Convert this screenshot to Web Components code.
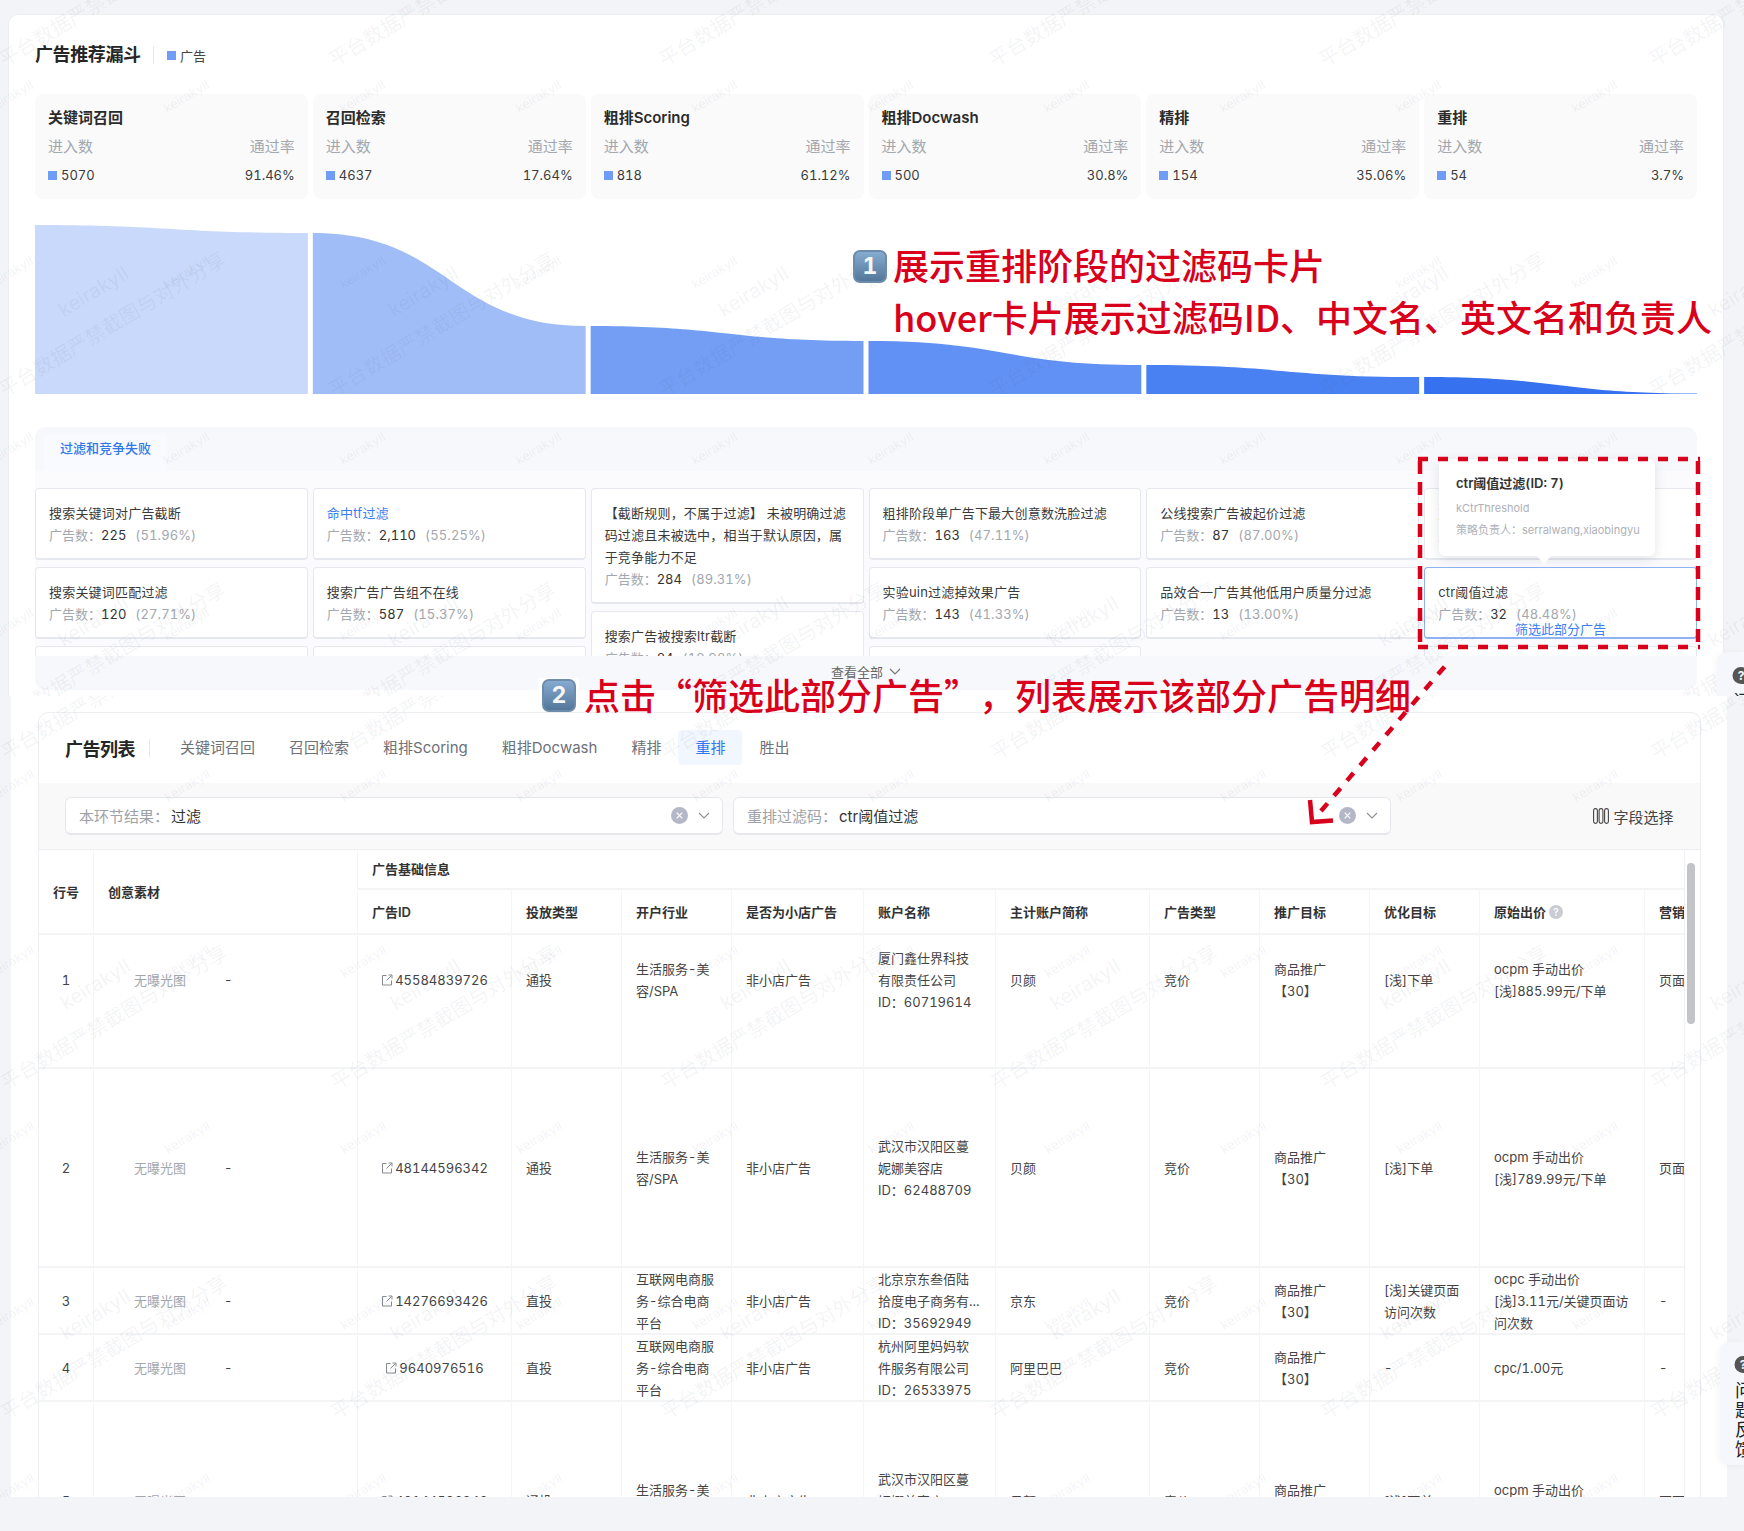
<!DOCTYPE html>
<html lang="zh-CN"><head><meta charset="utf-8"><title>广告推荐漏斗</title>
<style>
html,body{margin:0;padding:0}
body{width:1744px;height:1531px;position:relative;overflow:hidden;background:#f3f4f7;font-family:Inter,"Noto Sans CJK SC",sans-serif;font-variant-numeric:tabular-nums;color:#333;font-size:13px}
shot-top,shot-bottom{display:block}
</style></head><body>
<shot-top></shot-top>
<shot-bottom></shot-bottom>
<note-layer></note-layer>
<script>
function def(name,css,html,extra){
  customElements.define(name,class extends HTMLElement{
    connectedCallback(){
      if(this.shadowRoot)return;
      const r=this.attachShadow({mode:'open'});
      r.innerHTML='<style>'+css+'</style>'+(typeof html==='function'?html(this):html);
      if(extra)extra(this,r);
    }
  });
}
/* watermark */
def('wm-layer',`:host{position:absolute;inset:0;overflow:hidden;pointer-events:none;z-index:5}
span{position:absolute;white-space:nowrap;transform-origin:0 100%;transform:rotate(-31deg);line-height:1}
.a{font-size:20px;color:rgba(70,80,100,.07)}.b{font-size:20px;color:rgba(70,80,100,.07)}.c{font-size:13px;color:rgba(70,80,100,.08)}`,
h=>{
  const bx=+h.getAttribute('bx'),by=+h.getAttribute('by'),sx=+h.getAttribute('sx'),sy=+h.getAttribute('sy'),H=+h.getAttribute('h');
  let o='';
  const put=(c,x,y,t,fs)=>{o+=`<span class="${c}" style="left:${x}px;top:${y-fs}px">${t}</span>`};
  for(let i=0;i<6;i++)for(let j=-1;j<4;j++){
    const x=bx+330*i,y=by+330*j;
    if(y-160>H)continue;
    put('a',x,y,'平台数据严禁截图与对外分享',20);
    put('b',x+59,y-80,'keirakyll',20);
  }
  for(let i=0;i<11;i++)for(let j=-1;j<6;j++){
    const x=sx+176*i,y=sy+176*j;
    if(y-40>H||y<0)continue;
    put('c',x,y,'keirakyll',13);
  }
  return o;
});
/* stat card */
def('stat-card',`:host{display:block;background:#fafafa;border-radius:8px;padding:11px 13px 12px;height:105px;box-sizing:border-box}
.t{font-size:15px;font-weight:600;line-height:26px;color:#2b2b2b}
.r{display:flex;justify-content:space-between}
.l{line-height:32px;font-size:15px;color:#a3a7ae}
.v{line-height:24px;font-size:13px;color:#3c3c3c}
i{display:inline-block;width:9px;height:9px;background:#6f9cf5;margin-right:4px}`,
h=>`<div class="t">${h.getAttribute('name')}</div><div class="r l"><span>进入数</span><span>通过率</span></div><div class="r v"><span><i></i>${h.getAttribute('count')}</span><span>${h.getAttribute('rate')}</span></div>`);
/* funnel */
def('funnel-chart',`:host{display:block;height:169px;margin-top:26px}svg{display:block}`,
()=>{
  const ys=[[0,8],[8,101],[101,116],[116,140],[140,152],[152,168.5]],cs=['#c8d9fb','#a1bdf8','#739ef4','#6191f4','#4a81f2','#3671f0'];
  let p='';
  ys.forEach((y,i)=>{const a=277.83*i,b=a+272.83,m=136;
    p+=`<path fill="${cs[i]}" d="M${a} ${y[0]}C${a+m} ${y[0]} ${b-m} ${y[1]} ${b} ${y[1]}L${b} 169L${a} 169Z"/>`});
  return `<svg width="1662" height="169" viewBox="0 0 1662 169">${p}</svg>`;
});
/* filter card */
def('filter-card',`:host{display:block;position:relative;flex:none;box-sizing:border-box;background:#fff;border:1px solid #e6e8ef;border-bottom-width:2px;border-radius:4px;padding:13px 13px 12px;line-height:22px;font-size:13px;color:#3a3a3a}
:host([sel]){border-color:#8fb2f5}
:host([link]) .n{color:#3b7ff0}
.n{letter-spacing:.2px}
.g{color:#a3a7ae}.c{color:#333}.p{color:#a3a7ae;margin-left:9px;letter-spacing:.1px}
.act{position:absolute;left:0;right:0;top:50px;text-align:center;color:#3b7ff0}`,
h=>`<div class="n"><slot></slot></div><div class="m"><span class="g">广告数：</span><span class="c">${h.getAttribute('n')}</span><span class="p">(${h.getAttribute('p')})</span></div>${h.hasAttribute('sel')?'<div class="act">筛选此部分广告</div>':''}`);
def('tip-box',`:host{position:absolute;left:1404px;top:32px;width:216px;height:97px;box-sizing:border-box;background:#fff;border-radius:6px;box-shadow:0 3px 12px rgba(40,50,70,.13);padding:13px 17px;z-index:3}
.t{font-size:13px;font-weight:600;line-height:22px;color:#333}.k{font-size:11px;color:#aeb2b8;line-height:22px;margin-top:3px;white-space:nowrap}
.k2{margin-top:0}
b{position:absolute;left:98px;bottom:-8px;width:0;height:0;border:7px solid transparent;border-bottom:0;border-top:8px solid #fff}`,
`<div class="t">ctr阈值过滤(ID: 7)</div><div class="k">kCtrThreshold</div><div class="k k2">策略负责人：serralwang,xiaobingyu</div><b></b>`);
def('filter-panel',`:host{display:block;position:relative;margin-top:33px;height:263px;background:#f7f8fc;border-radius:10px}
.h{height:44px;box-sizing:border-box}
.tab{display:inline-block;margin:8px 0 0 9px;height:36px;padding:0 16px;line-height:27px;background:#f8faff;color:#2f78ee;font-size:13px;font-weight:500;border-radius:4px 4px 0 0}
.b{background:#fbfbfe;height:185px;padding-top:17px;box-sizing:border-box;overflow:hidden}
.grid{display:grid;grid-template-columns:repeat(6,1fr);gap:5px;height:168px;overflow:hidden;width:1662px}
.col{display:flex;flex-direction:column;gap:7px}
.f{height:34px;display:flex;align-items:center;justify-content:center;gap:6px;color:#666;font-size:13px;padding-bottom:3px;box-sizing:border-box}`,
`<div class="h"><span class="tab">过滤和竞争失败</span></div>
<div class="b"><div class="grid">
<div class="col"><filter-card n="225" p="51.96%">搜索关键词对广告截断</filter-card><filter-card n="120" p="27.71%">搜索关键词匹配过滤</filter-card><filter-card n="98" p="22.63%">搜索广告计划不在线</filter-card></div>
<div class="col"><filter-card link n="2,110" p="55.25%">命中tf过滤</filter-card><filter-card n="587" p="15.37%">搜索广告广告组不在线</filter-card><filter-card n="201" p="5.26%">搜索广告不在投放时段</filter-card></div>
<div class="col"><filter-card n="284" p="89.31%">【截断规则，不属于过滤】 未被明确过滤码过滤且未被选中，相当于默认原因，属于竞争能力不足</filter-card><filter-card n="84" p="19.98%">搜索广告被搜索ltr截断</filter-card></div>
<div class="col"><filter-card n="163" p="47.11%">粗排阶段单广告下最大创意数洗脸过滤</filter-card><filter-card n="143" p="41.33%">实验uin过滤掉效果广告</filter-card><filter-card n="40" p="11.56%">粗排阶段过滤</filter-card></div>
<div class="col"><filter-card n="87" p="87.00%">公线搜索广告被起价过滤</filter-card><filter-card n="13" p="13.00%">品效合一广告其他低用户质量分过滤</filter-card></div>
<div class="col"><filter-card n="34" p="51.52%">重排过滤</filter-card><filter-card sel n="32" p="48.48%">ctr阈值过滤</filter-card><filter-card n="12" p="18.18%">重排阶段过滤</filter-card></div>
</div></div>
<div class="f"><span>查看全部</span><svg width="12" height="8" viewBox="0 0 12 8"><path d="M1 1l5 5 5-5" fill="none" stroke="#777" stroke-width="1.2"/></svg></div>
<tip-box></tip-box>`);
/* float */
const bubble=`<svg width="22" height="20" viewBox="0 0 22 20"><path d="M10 1a8.5 8.5 0 1 0 0 17h9l-2.2-3.6A8.5 8.5 0 0 0 10 1z" fill="#555"/><text x="10" y="14" text-anchor="middle" font-size="12" font-weight="700" fill="#f5f7fd" font-family="Inter,sans-serif">?</text></svg>`;
def('float-help',`:host{position:absolute;background:#f5f7fd;border-radius:10px 0 0 10px;box-shadow:-1px 1px 6px rgba(60,70,90,.06);box-sizing:border-box;z-index:6;overflow:hidden}
.t{font-size:18px;line-height:19.5px;width:18px;color:#222;margin:6px 0 0 2px}svg{display:block}`,
()=>`${bubble}<div class="t">问题反馈</div>`);
/* top shot */
def('shot-top',`:host{display:block;position:relative;height:696px;overflow:hidden}
.card{position:absolute;left:8px;right:20px;top:14px;bottom:-20px;box-sizing:border-box;background:#fff;border:1px solid #eceef2;border-radius:10px;padding:26px 26px 0}
.hd{display:flex;align-items:center;height:28px}
h1{margin:0;font-size:18px;font-weight:600;color:#262626;line-height:28px;width:118px;letter-spacing:-.4px}
.d{width:1px;height:18px;background:#e8e8e8}
.lg{display:flex;align-items:center;font-size:13px;color:#444;margin-left:13px}
.lg i{width:9px;height:9px;background:#6f9cf5;margin-right:4px}
.st{display:grid;grid-template-columns:repeat(6,1fr);gap:5px;margin-top:25px;width:1662px}
float-help{left:1717px;top:652px;width:27px;height:60px;padding:14px 0 0 14px}`,
`<div class="card"><div class="hd"><h1>广告推荐漏斗</h1><span class="d"></span><span class="lg"><i></i>广告</span></div>
<div class="st">
<stat-card name="关键词召回" count="5070" rate="91.46%"></stat-card>
<stat-card name="召回检索" count="4637" rate="17.64%"></stat-card>
<stat-card name="粗排Scoring" count="818" rate="61.12%"></stat-card>
<stat-card name="粗排Docwash" count="500" rate="30.8%"></stat-card>
<stat-card name="精排" count="154" rate="35.06%"></stat-card>
<stat-card name="重排" count="54" rate="3.7%"></stat-card>
</div><funnel-chart></funnel-chart><filter-panel></filter-panel></div>
<float-help></float-help>
<wm-layer bx="6" by="70" sx="-8" sy="115" h="696"></wm-layer>`);
/* select */
const clearI=`<svg width="17" height="17" viewBox="0 0 17 17"><circle cx="8.5" cy="8.5" r="8.5" fill="#b4b8c6"/><path d="M5.7 5.7l5.6 5.6M11.3 5.7l-5.6 5.6" stroke="#fff" stroke-width="1.2"/></svg>`;
const chev=`<svg width="12" height="8" viewBox="0 0 12 8"><path d="M1 1l5 5 5-5" fill="none" stroke="#8a8f98" stroke-width="1.1"/></svg>`;
def('select-box',`:host{display:flex;align-items:center;box-sizing:border-box;width:658px;height:38px;background:#fff;border:1px solid #e5e7ec;border-bottom-width:2px;border-radius:6px;padding:0 12px 0 13px;font-size:15px}
.l{color:#9da1a8;margin-right:2px}.v{color:#333}.s{flex:1}svg{display:block}.c{margin-right:10px}`,
h=>`<span class="l">${h.getAttribute('label')}：</span><span class="v">${h.getAttribute('value')}</span><span class="s"></span><span class="c">${clearI}</span>${chev}`);
/* table */
const ext=`<svg width="12" height="12" viewBox="0 0 12 12" style="margin-right:2px;flex:none"><path d="M5.5 1.5H1.5v9.5h9V6.5M5.5 6.5l5-5M7.5 1h3.5v3.5" fill="none" stroke="#85898f" stroke-width="1"/></svg>`;
const rows=[
 {h:134,pb:42,n:1,id:'45584839726',t:'通投',ind:'生活服务-美<br>容/SPA',ac:'厦门鑫仕界科技<br>有限责任公司<br>ID：60719614',s:'贝颜',o:'[浅]下单',b:'ocpm 手动出价<br>[浅]885.99元/下单',m:'页面'},
 {h:199,pb:0,n:2,id:'48144596342',t:'通投',ind:'生活服务-美<br>容/SPA',ac:'武汉市汉阳区蔓<br>妮娜美容店<br>ID：62488709',s:'贝颜',o:'[浅]下单',b:'ocpm 手动出价<br>[浅]789.99元/下单',m:'页面'},
 {h:67,pb:0,n:3,id:'14276693426',t:'直投',ind:'互联网电商服<br>务-综合电商<br>平台',ac:'北京京东叁佰陆<br>拾度电子商务有...<br>ID：35692949',s:'京东',o:'[浅]关键页面<br>访问次数',b:'ocpc 手动出价<br>[浅]3.11元/关键页面访<br>问次数',m:'-'},
 {h:67,pb:0,n:4,id:'9640976516',t:'直投',ind:'互联网电商服<br>务-综合电商<br>平台',ac:'杭州阿里妈妈软<br>件服务有限公司<br>ID：26533975',s:'阿里巴巴',o:'-',b:'cpc/1.00元',m:'-'},
 {h:199,pb:0,n:5,id:'48144596342',t:'通投',ind:'生活服务-美<br>容/SPA',ac:'武汉市汉阳区蔓<br>妮娜美容店<br>ID：62488709',s:'贝颜',o:'[浅]下单',b:'ocpm 手动出价<br>[浅]789.99元/下单',m:'页面'}
];
const help=`<svg width="14" height="14" viewBox="0 0 14 14" style="vertical-align:-2px;margin-left:3px"><circle cx="7" cy="7" r="7" fill="#c9ccd3"/><text x="7" y="11" text-anchor="middle" font-size="10" fill="#fff" font-family="Inter,sans-serif">?</text></svg>`;
def('ad-table',`:host{display:block;position:relative;height:647px;overflow:hidden;border-top:1px solid #eceef1}
.w{width:1645px;overflow:hidden;height:100%}
table{border-collapse:separate;border-spacing:0;table-layout:fixed;width:1717px;font-size:13px;line-height:22px;color:#444}
th{font-weight:600;color:#333;text-align:left;padding:0 14px;border-right:1px solid #f4f5f7;border-bottom:2px solid #f3f4f6;box-sizing:border-box}
td{padding:0;border-right:1px solid #f4f5f7;border-bottom:2px solid #f3f4f6;box-sizing:border-box;vertical-align:top}
.x{display:flex;align-items:center;box-sizing:border-box;padding:0 14px;white-space:nowrap}
th.c{text-align:center}.x.c{justify-content:center;padding:0}.x.id{justify-content:center;padding:0}
.g{color:#a3a7ae;display:inline-block;width:90px;padding-left:26px}
.bar{position:absolute;left:1648px;top:13px;width:8px;height:161px;border-radius:4px;background:#c2c4c8}
.tr{position:absolute;left:1645px;top:0;bottom:0;width:1px;background:#eff0f3}`,
()=>{
  const widths=[55,264,154,110,110,132,132,154,110,110,110,165,111];
  let b='';
  rows.forEach(r=>{
    const cell=(t,x='')=>`<td style="height:${r.h}px"><div class="x ${x}" style="height:${r.h-2}px;padding-bottom:${r.pb}px"><div>${t}</div></div></td>`;
    const idc=`<td style="height:${r.h}px"><div class="x id" style="height:${r.h-2}px;padding-bottom:${r.pb}px">${ext}<span>${r.id}</span></div></td>`;
    b+='<tr>'+cell(r.n,'c')+cell('<span class="g">无曝光图</span>-')+idc+cell(r.t)+cell(r.ind)+cell('非小店广告')+cell(r.ac)+cell(r.s)+cell('竞价')+cell('商品推广<br>【30】')+cell(r.o)+cell(r.b)+cell(r.m)+'</tr>';
  });
  return `<div class="w"><table><colgroup>${widths.map(w=>`<col style="width:${w}px">`).join('')}</colgroup>
<thead><tr style="height:40px"><th rowspan="2" class="c">行号</th><th rowspan="2">创意素材</th><th colspan="11">广告基础信息</th></tr>
<tr style="height:45px"><th>广告ID</th><th>投放类型</th><th>开户行业</th><th>是否为小店广告</th><th>账户名称</th><th>主计账户简称</th><th>广告类型</th><th>推广目标</th><th>优化目标</th><th>原始出价${help}</th><th>营销</th></tr></thead>
<tbody>${b}</tbody></table></div><div class="tr"></div><div class="bar"></div>`;
});
/* bottom shot */
def('shot-bottom',`:host{display:block;position:relative;height:801px;overflow:hidden}
.bg{position:absolute;left:11px;width:1715.5px;top:0;bottom:0;background:#fff;padding:16px 26px 0 27px;box-sizing:border-box}
.card{border:1px solid #eeeff2;border-bottom:0;border-radius:10px 10px 0 0;height:800px;overflow:hidden;background:#fff}
.hd{height:70px;display:flex;align-items:center;padding:0 0 1px 26px;box-sizing:border-box}
h2{margin:0;font-size:18px;font-weight:600;color:#262626;width:84px;letter-spacing:-.5px}
.d{width:1px;height:18px;background:#e8e8e8;margin-right:13px}
.tab{height:35px;line-height:35px;padding:0 17px;font-size:15px;color:#6d7178;border-radius:4px;box-sizing:border-box}
.tab.on{background:#f2f6fe;color:#2f78ee}
.fb{height:66px;background:#f9f9fa;display:flex;align-items:center;gap:10px;padding:0 26px;box-sizing:border-box}
.fs{margin-left:auto;display:flex;align-items:center;gap:4px;font-size:15px;color:#444}
svg{display:block}
float-help{left:1720px;top:646px;width:24px;height:123px;padding:13px 0 0 13px}`,
`<div class="bg"><div class="card"><div class="hd"><h2>广告列表</h2><span class="d"></span>
<span class="tab">关键词召回</span><span class="tab">召回检索</span><span class="tab">粗排Scoring</span><span class="tab">粗排Docwash</span><span class="tab">精排</span><span class="tab on">重排</span><span class="tab">胜出</span></div>
<div class="fb"><select-box label="本环节结果" value="过滤"></select-box><select-box label="重排过滤码" value="ctr阈值过滤"></select-box>
<span class="fs"><svg width="16" height="16" viewBox="0 0 16 16" fill="none" stroke="#444" stroke-width="1.1"><rect x=".6" y=".6" width="3.8" height="14.8" rx="1.9"/><rect x="6.1" y=".6" width="3.8" height="14.8" rx="1.9"/><rect x="11.6" y=".6" width="3.8" height="14.8" rx="1.9"/></svg>字段选择</span></div>
<ad-table></ad-table></div></div>
<float-help></float-help>
<wm-layer bx="8" by="67" sx="-7" sy="108" h="801"></wm-layer>`);
/* annotations */
def('note-key',`:host{position:absolute;box-sizing:border-box;width:34px;height:33px;background:linear-gradient(#86abd0,#527799);border:2px solid #6d8cab;border-radius:7px;color:#f4f6f8;font-size:23px;line-height:29px;text-align:center;font-weight:700;font-family:Inter,sans-serif}`,`<slot></slot>`);
def('note-layer',`:host{position:absolute;left:0;top:0;width:1744px;height:1531px;pointer-events:none;z-index:20}
svg{position:absolute;left:0;top:0}
.t{position:absolute;white-space:nowrap;color:#d9001b;font-family:"Noto Sans CJK SC",sans-serif;font-size:36px;font-weight:500;line-height:44px}
.sp{margin-left:17px}
.bgk{position:absolute;left:539px;top:678px;width:40px;height:34px;background:#fff}`,
`<svg width="1744" height="1531" fill="none">
<path d="M1418 459H1700M1418 647H1700" stroke="#d9001b" stroke-width="4.5" stroke-dasharray="10 10"/>
<path d="M1420 461V647M1698 461V647" stroke="#d9001b" stroke-width="4.5" stroke-dasharray="13 8"/>
<path d="M1321 811L1446 665" stroke="#d9001b" stroke-width="4.5" stroke-dasharray="10 10"/>
<path d="M1310 800L1312 822L1333 820.5" stroke="#d9001b" stroke-width="4.5"/>
</svg>
<div class="bgk"></div>
<note-key style="left:853px;top:250px">1</note-key>
<note-key style="left:542px;top:679px">2</note-key>
<div class="t" style="left:893px;top:242px">展示重排阶段的过滤码卡片</div>
<div class="t" style="left:893px;top:294px">hover卡片展示过滤码ID、中文名、英文名和负责人</div>
<div class="t" style="left:584px;top:672px">点击“筛选此部分广告”<span class="sp">，</span>列表展示该部分广告明细</div>`);
</script>
</body></html>
